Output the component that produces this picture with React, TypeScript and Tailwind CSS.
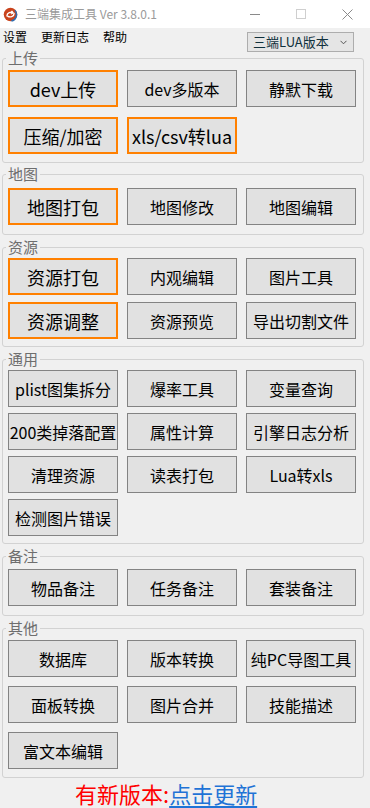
import React from 'react'

type Btn = [string, boolean]

type Group = {
  title: string
  mt: string
  pt: string
  pb: string
  gap: string
  items: Btn[]
}

const groups: Group[] = [
  {
    title: '上传', mt: 'mt-0', pt: 'pt-[4px]', pb: 'pb-[8px]', gap: 'gap-y-[10px]',
    items: [['dev上传', true], ['dev多版本', false], ['静默下载', false], ['压缩/加密', true], ['xls/csv转lua', true]],
  },
  {
    title: '地图', mt: 'mt-[3px]', pt: 'pt-[6px]', pb: 'pb-[9px]', gap: 'gap-y-[7px]',
    items: [['地图打包', true], ['地图修改', false], ['地图编辑', false]],
  },
  {
    title: '资源', mt: 'mt-[4px]', pt: 'pt-[3px]', pb: 'pb-[7px]', gap: 'gap-y-[7px]',
    items: [['资源打包', true], ['内观编辑', false], ['图片工具', false], ['资源调整', true], ['资源预览', false], ['导出切割文件', false]],
  },
  {
    title: '通用', mt: 'mt-[4px]', pt: 'pt-[3px]', pb: 'pb-[7px]', gap: 'gap-y-[6px]',
    items: [
      ['plist图集拆分', false], ['爆率工具', false], ['变量查询', false],
      ['200类掉落配置', false], ['属性计算', false], ['引擎日志分析', false],
      ['清理资源', false], ['读表打包', false], ['Lua转xls', false],
      ['检测图片错误', false],
    ],
  },
  {
    title: '备注', mt: 'mt-[4px]', pt: 'pt-[5px]', pb: 'pb-[9px]', gap: 'gap-y-[7px]',
    items: [['物品备注', false], ['任务备注', false], ['套装备注', false]],
  },
  {
    title: '其他', mt: 'mt-[4px]', pt: 'pt-[4px]', pb: 'pb-[8px]', gap: 'gap-y-[9px]',
    items: [
      ['数据库', false], ['版本转换', false], ['纯PC导图工具', false],
      ['面板转换', false], ['图片合并', false], ['技能描述', false],
      ['富文本编辑', false],
    ],
  },
]

function AppIcon() {
  return (
    <svg width="15" height="15" viewBox="0 0 16 16">
      <circle cx="8" cy="8" r="7.2" fill="#c9431c" />
      <path d="M12.8 3.6 A7 7 0 0 1 9 14.9" fill="none" stroke="#2f6db0" strokeWidth="1.6" />
      <path d="M4.2 9.5 C4.2 6 8.5 5 10.8 6.2 M10.8 6.2 L9.6 4.6 M10.8 6.2 L8.9 7.2" fill="none" stroke="#fff" strokeWidth="1.5" strokeLinecap="round" />
      <path d="M11.8 6.8 C11.8 10.4 7.4 11.2 5.2 9.9" fill="none" stroke="#fff" strokeWidth="1.5" strokeLinecap="round" />
    </svg>
  )
}

function ToolButton({ label, hot }: { label: string; hot: boolean }) {
  return (
    <button
      className={`h-[37px] w-[110px] flex items-center justify-center whitespace-nowrap bg-[#e1e1e1] text-black ${
        hot ? 'border-2 border-[#ff8000] text-[18px] leading-[22px]' : 'border border-[#838383] text-[16px] leading-[20px]'
      }`}
    >
      {label}
    </button>
  )
}

export default function App() {
  return (
    <div className="w-[370px] min-h-screen bg-[#f0f0f0] font-['Noto_Sans_CJK_SC','Noto_Sans',sans-serif] select-none">
      {/* title bar */}
      <div className="h-[28px] bg-white flex items-center">
        <div className="ml-[3px] flex items-center">
          <AppIcon />
        </div>
        <span className="ml-[7px] text-[12px] leading-[16px] text-[#9a9a9a]">三端集成工具 Ver 3.8.0.1</span>
        <div className="ml-auto flex h-full">
          <div className="w-[46px] h-full flex items-center justify-center">
            <div className="w-[10px] h-px bg-[#8a8a8a]" />
          </div>
          <div className="w-[46px] h-full flex items-center justify-center">
            <div className="w-[10px] h-[10px] border border-[#cfcfcf]" />
          </div>
          <div className="w-[46px] h-full flex items-center justify-center">
            <svg width="11" height="11" viewBox="0 0 11 11">
              <path d="M0.5 0.5 L10.5 10.5 M10.5 0.5 L0.5 10.5" stroke="#8a8a8a" strokeWidth="1" />
            </svg>
          </div>
        </div>
      </div>

      {/* menu bar */}
      <div className="h-[24px] flex items-start">
        <div className="flex gap-[14px] pl-[3px] mt-[1px] text-[12px] leading-[16px] text-black">
          <span>设置</span>
          <span>更新日志</span>
          <span>帮助</span>
        </div>
        <div className="ml-auto mr-[16px] mt-[4px] h-[20px] w-[107px] border border-[#adadad] bg-[#e5e5e5] flex items-center pl-[5px] pr-[6px]">
          <span className="text-[13px] leading-[16px] text-[#10303c]">三端LUA版本</span>
          <svg className="ml-auto" width="7" height="5" viewBox="0 0 7 5">
            <path d="M0.5 0.8 L3.5 3.8 L6.5 0.8" fill="none" stroke="#555" strokeWidth="1" />
          </svg>
        </div>
      </div>

      {/* groups */}
      <div className="-mt-[2px] ml-[2px] w-[362px]">
        {groups.map(g => (
          <fieldset key={g.title} className={`${g.mt} ${g.pb} px-[3px] border border-[#d2d2d2] rounded-[3px]`}>
            <legend className="px-[2px] text-[15px] leading-[16px] text-[#6e6e6e]">{g.title}</legend>
            <div className={`${g.pt} ml-[2px] grid grid-cols-[110px_110px_110px] gap-x-[9px] ${g.gap}`}>
              {g.items.map(([label, hot]) => (
                <ToolButton key={label} label={label} hot={hot} />
              ))}
            </div>
          </fieldset>
        ))}
      </div>

      {/* update notice */}
      <div className="pl-[75px] pt-[1px] text-[22px] leading-[28px] whitespace-nowrap">
        <span className="text-[#ff0000]">有新版本:</span>
        <span className="text-[#1f73d6] underline underline-offset-[3px]">点击更新</span>
      </div>
    </div>
  )
}
